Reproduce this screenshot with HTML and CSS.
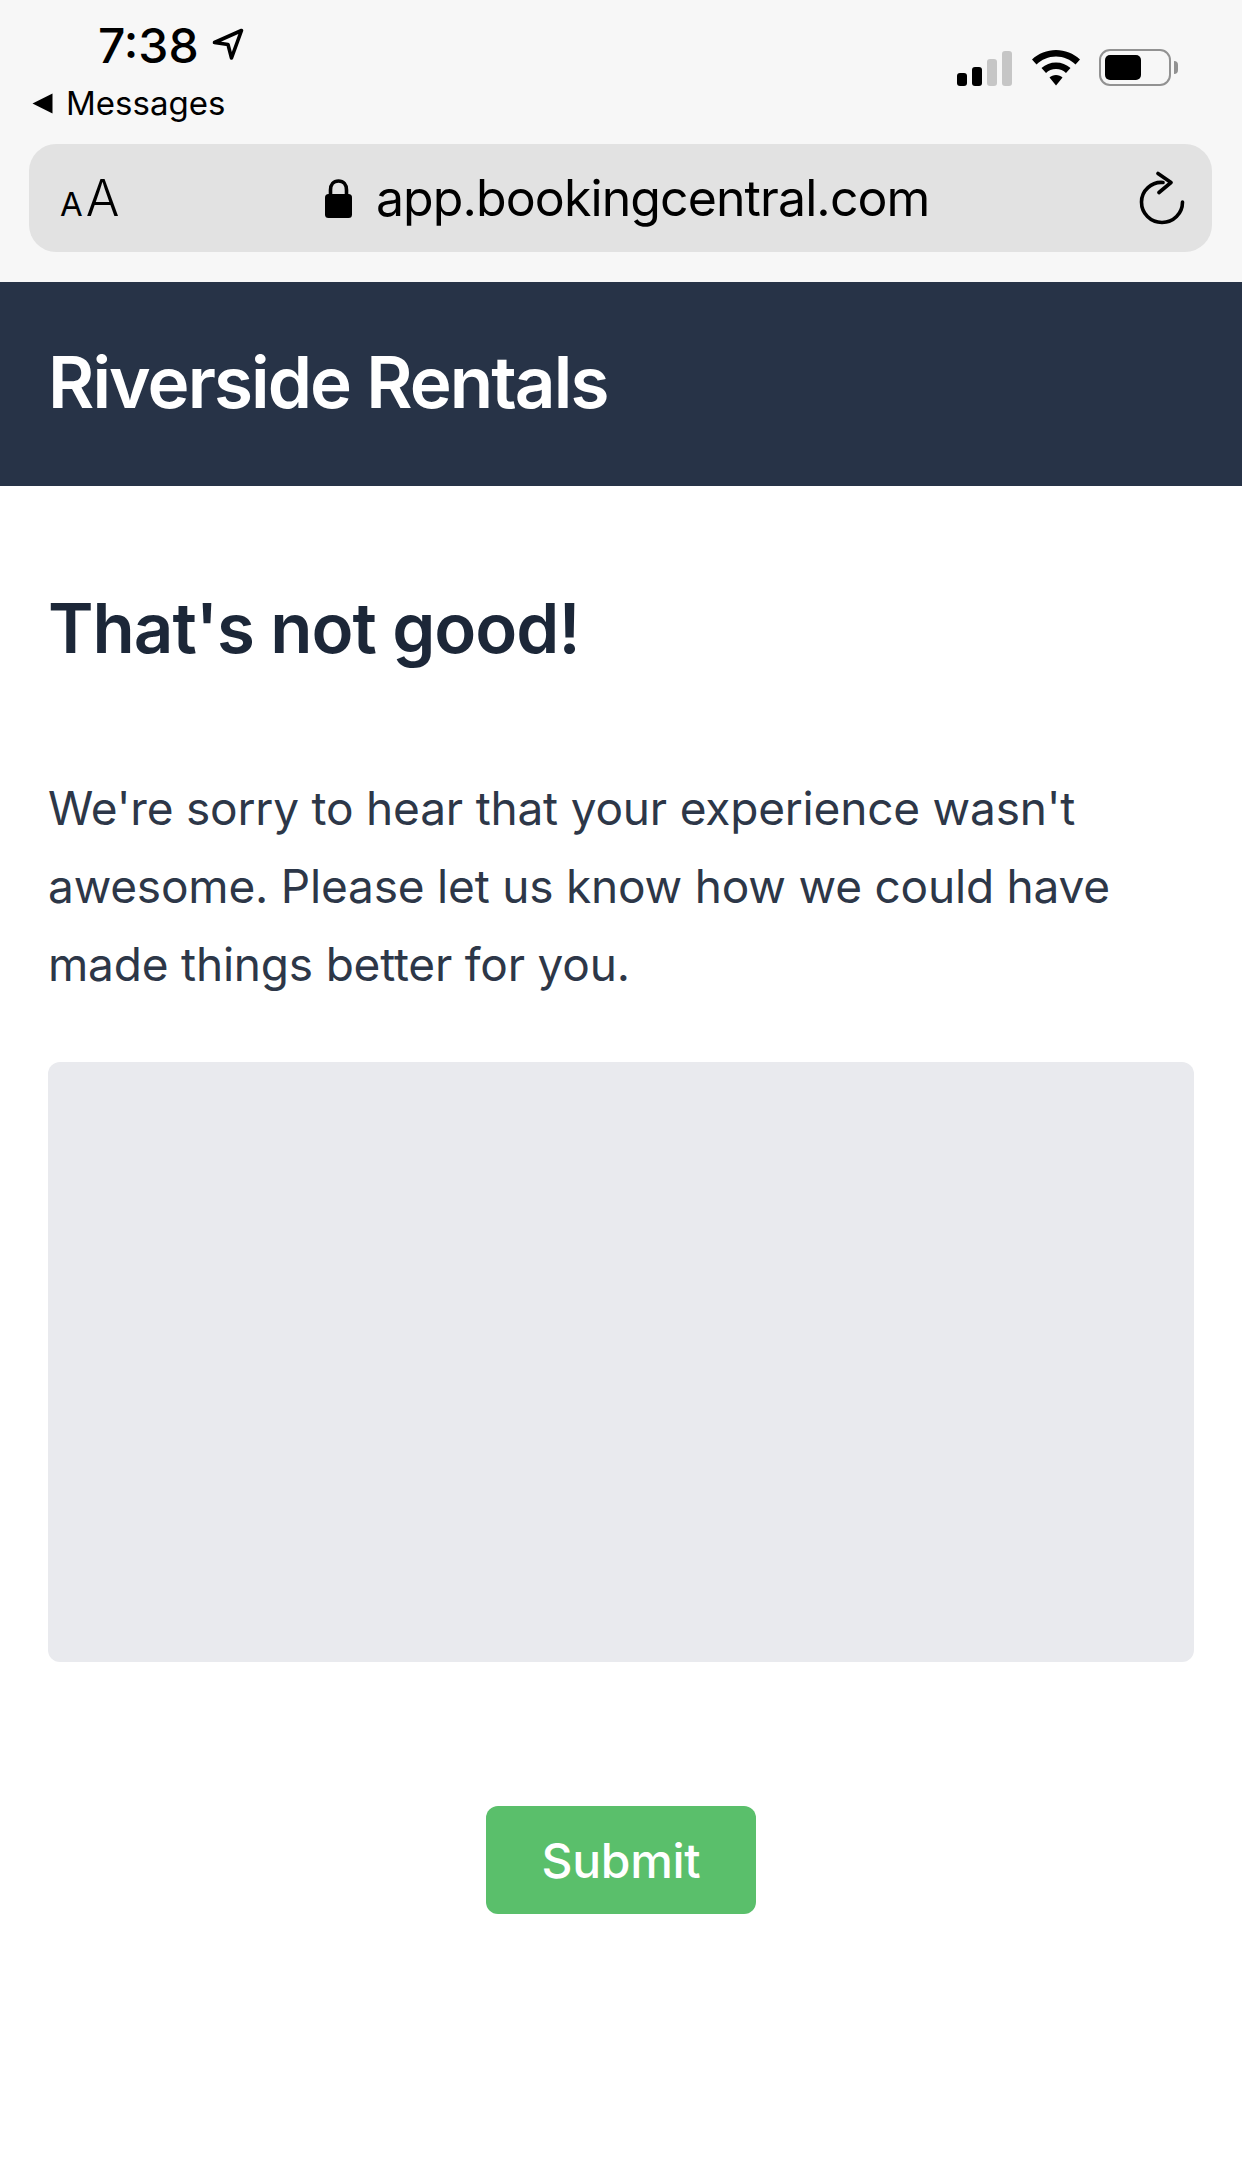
FILE: index.html
```html
<!DOCTYPE html>
<html lang="en">
<head>
    <meta charset="UTF-8">
    <meta name="viewport" content="width=device-width, initial-scale=1.0">
    <title>Riverside Rentals</title>
    <link rel="stylesheet" href="styles.css">
</head>
<body>
    <div class="chrome">
        <div class="status">
            <div class="status-left">
                <div class="time-row">
                    <span class="time">7:38</span>
                    <svg class="nav-arrow" width="32" height="33" viewBox="0 0 32 33">
                        <path d="M2.5 14.5 L29.5 2.5 L19.5 30 L16 16.5 Z" fill="none" stroke="#000" stroke-width="3.6" stroke-linejoin="round"/>
                    </svg>
                </div>
                <div class="back-row">
                    <svg class="back-arrow" width="21" height="21" viewBox="0 0 21 21">
                        <path d="M0.5 10.5 L20.5 0.5 L20.5 20.5 Z" fill="#000"/>
                    </svg>
                    <span class="back-label">Messages</span>
                </div>
            </div>
            <div class="status-right">
                <div class="signal">
                    <span class="bar bar-1"></span>
                    <span class="bar bar-2"></span>
                    <span class="bar bar-3"></span>
                    <span class="bar bar-4"></span>
                </div>
                <svg class="wifi" width="48" height="36" viewBox="0 0 48 36">
                    <path d="M24 0 C33 0 41.500 3.500 48 9.500 L43.500 14.500 C38.500 9.500 31.500 6.500 24 6.500 C16.500 6.500 9.500 9.500 4.500 14.500 L0 9.500 C6.500 3.500 15 0 24 0 Z" fill="#000"/>
                    <path d="M24 12.500 C29.500 12.500 34.500 14.500 38.500 18 L34 23 C31.500 20.500 28 19 24 19 C20 19 16.500 20.500 14 23 L9.500 18 C13.500 14.500 18.500 12.500 24 12.500 Z" fill="#000"/>
                    <path d="M24 25 C26.500 25 29 26 30.500 27.500 L24 35.500 L17.500 27.500 C19 26 21.500 25 24 25 Z" fill="#000"/>
                </svg>
                <div class="battery">
                    <div class="battery-fill"></div>
                </div>
                <div class="battery-nub"></div>
            </div>
        </div>
        <div class="url-bar">
            <div class="aa"><span class="aa-small">A</span><span class="aa-big">A</span></div>
            <div class="url">
                <svg class="lock" width="27" height="39" viewBox="0 0 27 39">
                    <path d="M5.500 17 V11 C5.500 5.500 8.500 2 13.500 2 C18.500 2 21.500 5.500 21.500 11 V17" fill="none" stroke="#000" stroke-width="3.600"/>
                    <rect x="0" y="15" width="27" height="24" rx="3.500" fill="#000"/>
                </svg>
                <span class="url-text">app.bookingcentral.com</span>
            </div>
            <svg class="reload" width="46" height="54" viewBox="0 0 46 54">
                <path d="M24 11.500 C12.500 10.500 2.500 19.500 2.500 31 C2.500 42.500 11.500 51.500 23 51.500 C34.500 51.500 43.500 42.500 43.500 31" fill="none" stroke="#000" stroke-width="3.600" stroke-linecap="round"/>
                <path d="M19 2.500 L32 11.500 L20 21.500" fill="none" stroke="#000" stroke-width="3.600" stroke-linecap="round" stroke-linejoin="round"/>
            </svg>
        </div>
    </div>

    <header class="site-header">
        <h1 class="site-title">Riverside Rentals</h1>
    </header>

    <main class="content">
        <h2 class="heading">That's not good!</h2>
        <p class="message">We're sorry to hear that your experience wasn't awesome. Please let us know how we could have made things better for you.</p>
        <textarea class="feedback"></textarea>
        <div class="actions">
            <button class="submit" type="button">Submit</button>
        </div>
    </main>
</body>
</html>
```

FILE: styles.css
```css
* {
    box-sizing: border-box;
}

html, body {
    margin: 0;
    padding: 0;
}

body {
    width: 1242px;
    min-height: 2171px;
    background-color: #fff;
    font-family: "Inter", "Liberation Sans", sans-serif;
}

/* browser chrome */
.chrome {
    height: 282px;
    padding-top: 21px;
    background-color: #f7f7f7;
}

.status {
    display: flex;
    justify-content: space-between;
    height: 123px;
    padding-left: 32px;
    padding-right: 64px;
}

.time-row {
    display: flex;
    align-items: center;
    height: 50px;
    padding-left: 66px;
}

.time {
    font-size: 48px;
    font-weight: 500;
    line-height: 50px;
    color: #000;
}

.nav-arrow {
    margin-left: 13px;
    margin-top: -4px;
}

.back-row {
    display: flex;
    align-items: center;
    height: 40px;
    margin-top: 12px;
}

.back-label {
    margin-left: 13px;
    font-size: 33px;
    line-height: 40px;
    color: #000;
}

.status-right {
    display: flex;
    align-items: flex-end;
    height: 65px;
}

.signal {
    display: flex;
    align-items: flex-end;
    gap: 5px;
}

.bar {
    width: 10px;
    border-radius: 3px;
    background-color: #000;
}

.bar-1 { height: 13px; }
.bar-2 { height: 19px; }
.bar-3 { height: 27px; background-color: #c6c6c6; }
.bar-4 { height: 35px; background-color: #c6c6c6; }

.wifi {
    margin-left: 20px;
}

.battery {
    width: 72px;
    height: 37px;
    margin-left: 19px;
    padding: 4px;
    border: 2px solid #929292;
    border-radius: 11px;
}

.battery-fill {
    width: 36px;
    height: 100%;
    border-radius: 5px;
    background-color: #000;
}

.battery-nub {
    width: 4px;
    height: 13px;
    margin-left: 3px;
    margin-bottom: 12px;
    border-radius: 0 4px 4px 0;
    background-color: #929292;
}

.url-bar {
    display: flex;
    align-items: center;
    justify-content: space-between;
    width: 1183px;
    height: 108px;
    margin-left: 29px;
    padding-left: 31px;
    padding-right: 27px;
    border-radius: 27px;
    background-color: #e2e2e2;
}

.aa {
    display: flex;
    align-items: baseline;
    color: #000;
}

.aa-small {
    font-size: 33px;
}

.aa-big {
    margin-left: 3px;
    font-size: 50px;
    font-weight: 300;
}

.url {
    display: flex;
    align-items: center;
    margin-right: 4px;
}

.url-text {
    margin-left: 24px;
    font-size: 50px;
    letter-spacing: -0.9px;
    color: #000;
}

/* page */
.site-header {
    display: flex;
    align-items: center;
    height: 204px;
    padding-left: 48px;
    padding-bottom: 4px;
    background-color: #273347;
}

.site-title {
    margin: 0;
    font-size: 71px;
    font-weight: 600;
    letter-spacing: -1.9px;
    color: #fff;
}

.content {
    padding: 0 48px;
}

.heading {
    margin: 0;
    padding-top: 100px;
    font-size: 69px;
    line-height: 84px;
    font-weight: 600;
    letter-spacing: -1px;
    color: #1c2738;
}

.message {
    margin: 0;
    margin-top: 99px;
    font-size: 46px;
    line-height: 78px;
    letter-spacing: -0.2px;
    color: #2d3748;
}

.feedback {
    display: block;
    width: 100%;
    height: 600px;
    margin-top: 59px;
    border: none;
    border-radius: 12px;
    background-color: #e9eaee;
    resize: none;
}

.actions {
    display: flex;
    justify-content: center;
    margin-top: 144px;
}

.submit {
    width: 270px;
    height: 108px;
    border: none;
    border-radius: 12px;
    background-color: #5abf6b;
    font-family: inherit;
    font-size: 48px;
    font-weight: 500;
    letter-spacing: -0.3px;
    color: #fff;
}
```
